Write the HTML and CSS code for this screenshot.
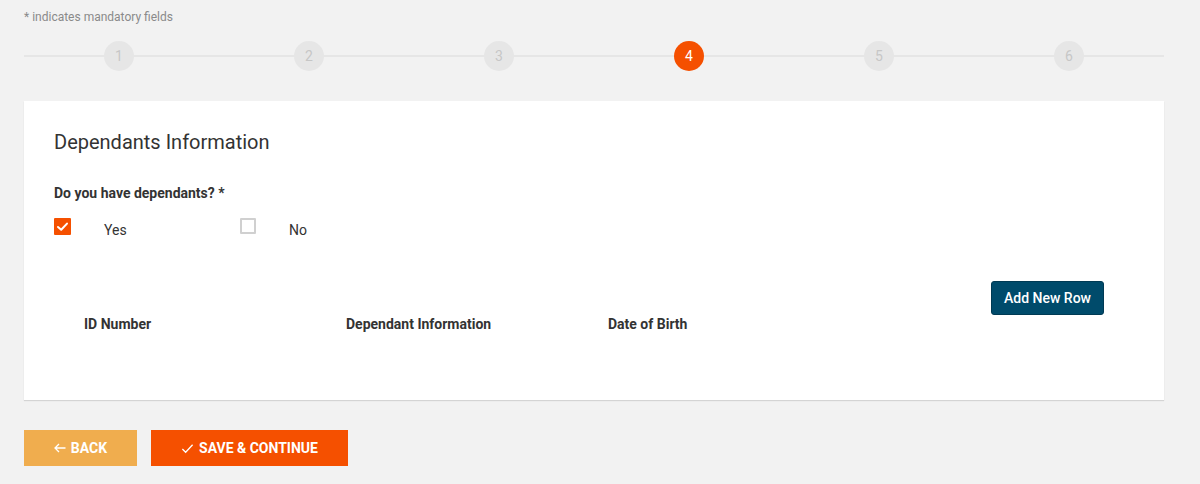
FILE: index.html
```html
<!DOCTYPE html>
<html lang="en">
<head>
<meta charset="utf-8">
<title>Dependants Information</title>
<link rel="stylesheet" href="styles.css">
</head>
<body>
<div class="page">
  <p class="note">* indicates mandatory fields</p>
  <div class="stepper">
    <div class="step"><span class="dot">1</span></div>
    <div class="step"><span class="dot">2</span></div>
    <div class="step"><span class="dot">3</span></div>
    <div class="step"><span class="dot active">4</span></div>
    <div class="step"><span class="dot">5</span></div>
    <div class="step"><span class="dot">6</span></div>
  </div>
  <section class="card">
    <h2 class="title">Dependants Information</h2>
    <p class="question">Do you have dependants? *</p>
    <div class="options">
      <label class="option">
        <span class="box checked"><svg viewBox="0 0 17 17" width="17" height="17"><path d="M4 9 L7.2 11.8 L13 5.6" fill="none" stroke="#fff" stroke-width="2" stroke-linecap="round" stroke-linejoin="round"/></svg></span>
        <span class="opt-text">Yes</span>
      </label>
      <label class="option">
        <span class="box plain"></span>
        <span class="opt-text wide">No</span>
      </label>
    </div>
    <div class="table-actions">
      <button class="add-btn">Add New Row</button>
    </div>
    <div class="table-head">
      <div class="th">ID Number</div>
      <div class="th">Dependant Information</div>
      <div class="th">Date of Birth</div>
    </div>
  </section>
  <div class="actions">
    <button class="btn back"><svg class="arrow" viewBox="0 0 12 10" width="12" height="10"><path d="M11.5 5 H1 M5 1 L1 5 L5 9" fill="none" stroke="#fff" stroke-width="1.3"/></svg>BACK</button>
    <button class="btn save"><svg class="check" viewBox="0 0 14 14" width="13" height="13"><path d="M1.5 7.5 L5 11 L12.5 3" fill="none" stroke="#fff" stroke-width="1.4"/></svg>SAVE &amp; CONTINUE</button>
  </div>
</div>
</body>
</html>
```
FILE: styles.css
```css
* { box-sizing: border-box; }
html, body { margin: 0; padding: 0; }
body {
  background: #f2f2f2;
  font-family: Roboto, "Liberation Sans", Arial, sans-serif;
  color: #333;
  width: 1200px;
  height: 484px;
  overflow: hidden;
}
.page {
  width: 1140px;
  margin-left: 24px;
  padding-top: 9px;
}
.note {
  margin: 0;
  font-size: 12px;
  line-height: 16px;
  color: #8a8a8a;
}
.stepper {
  margin-top: 16px;
  display: flex;
  background: linear-gradient(#e6e6e6, #e6e6e6) 0 14px / 100% 2px no-repeat;
}
.step {
  flex: 1;
  display: flex;
  justify-content: center;
}
.dot {
  width: 30px;
  height: 30px;
  border-radius: 50%;
  background: #e6e6e6;
  color: #c6c6c6;
  font-size: 14px;
  display: flex;
  align-items: center;
  justify-content: center;
}
.dot.active {
  background: #f55000;
  color: #fff;
}
.card {
  margin-top: 30px;
  background: #fff;
  height: 299px;
  padding: 29px 30px 0 30px;
  box-shadow: 0 1px 1px rgba(0,0,0,0.12);
}
.title {
  margin: 0;
  font-size: 20px;
  line-height: 24px;
  font-weight: 400;
  color: #333;
}
.question {
  margin: 29px 0 0 0;
  font-size: 14px;
  line-height: 20px;
  font-weight: 700;
  color: #333;
}
.options {
  margin-top: 15px;
  display: flex;
}
.option {
  width: 186px;
  display: flex;
  align-items: flex-start;
}
.box {
  width: 17px;
  height: 17px;
  border-radius: 1px;
  display: flex;
  flex-shrink: 0;
}
.box.plain {
  width: 16px;
  height: 16px;
  border: 2px solid #d0d0d0;
}
.box.checked {
  background: #f55000;
}
.opt-text {
  margin-left: 33px;
  padding-top: 2px;
  font-size: 14px;
  line-height: 20px;
  color: #333;
}
.table-actions {
  margin-top: 41px;
  display: flex;
  justify-content: flex-end;
  padding-right: 30px;
}
.add-btn {
  width: 113px;
  height: 34px;
  background: #004b6b;
  border: 1px solid #003a54;
  border-radius: 3px;
  color: #fff;
  font-family: inherit;
  font-size: 14px;
  font-weight: 500;
  padding: 0;
}
.table-head {
  display: flex;
  padding-left: 30px;
  margin-top: -1px;
}
.th {
  width: 262px;
  font-size: 14px;
  line-height: 20px;
  font-weight: 700;
  color: #333;
}
.actions {
  margin-top: 30px;
  display: flex;
  gap: 14px;
}
.btn {
  height: 36px;
  border: none;
  border-radius: 0;
  color: #fff;
  font-family: inherit;
  font-size: 14px;
  font-weight: 700;
  display: flex;
  align-items: center;
  justify-content: center;
  padding: 0;
}
.btn.back {
  width: 113px;
  background: #f0ad4e;
}
.btn.save {
  width: 197px;
  background: #f55000;
}
.arrow {
  margin-right: 5px;
}
.check {
  margin-right: 5px;
}
```
